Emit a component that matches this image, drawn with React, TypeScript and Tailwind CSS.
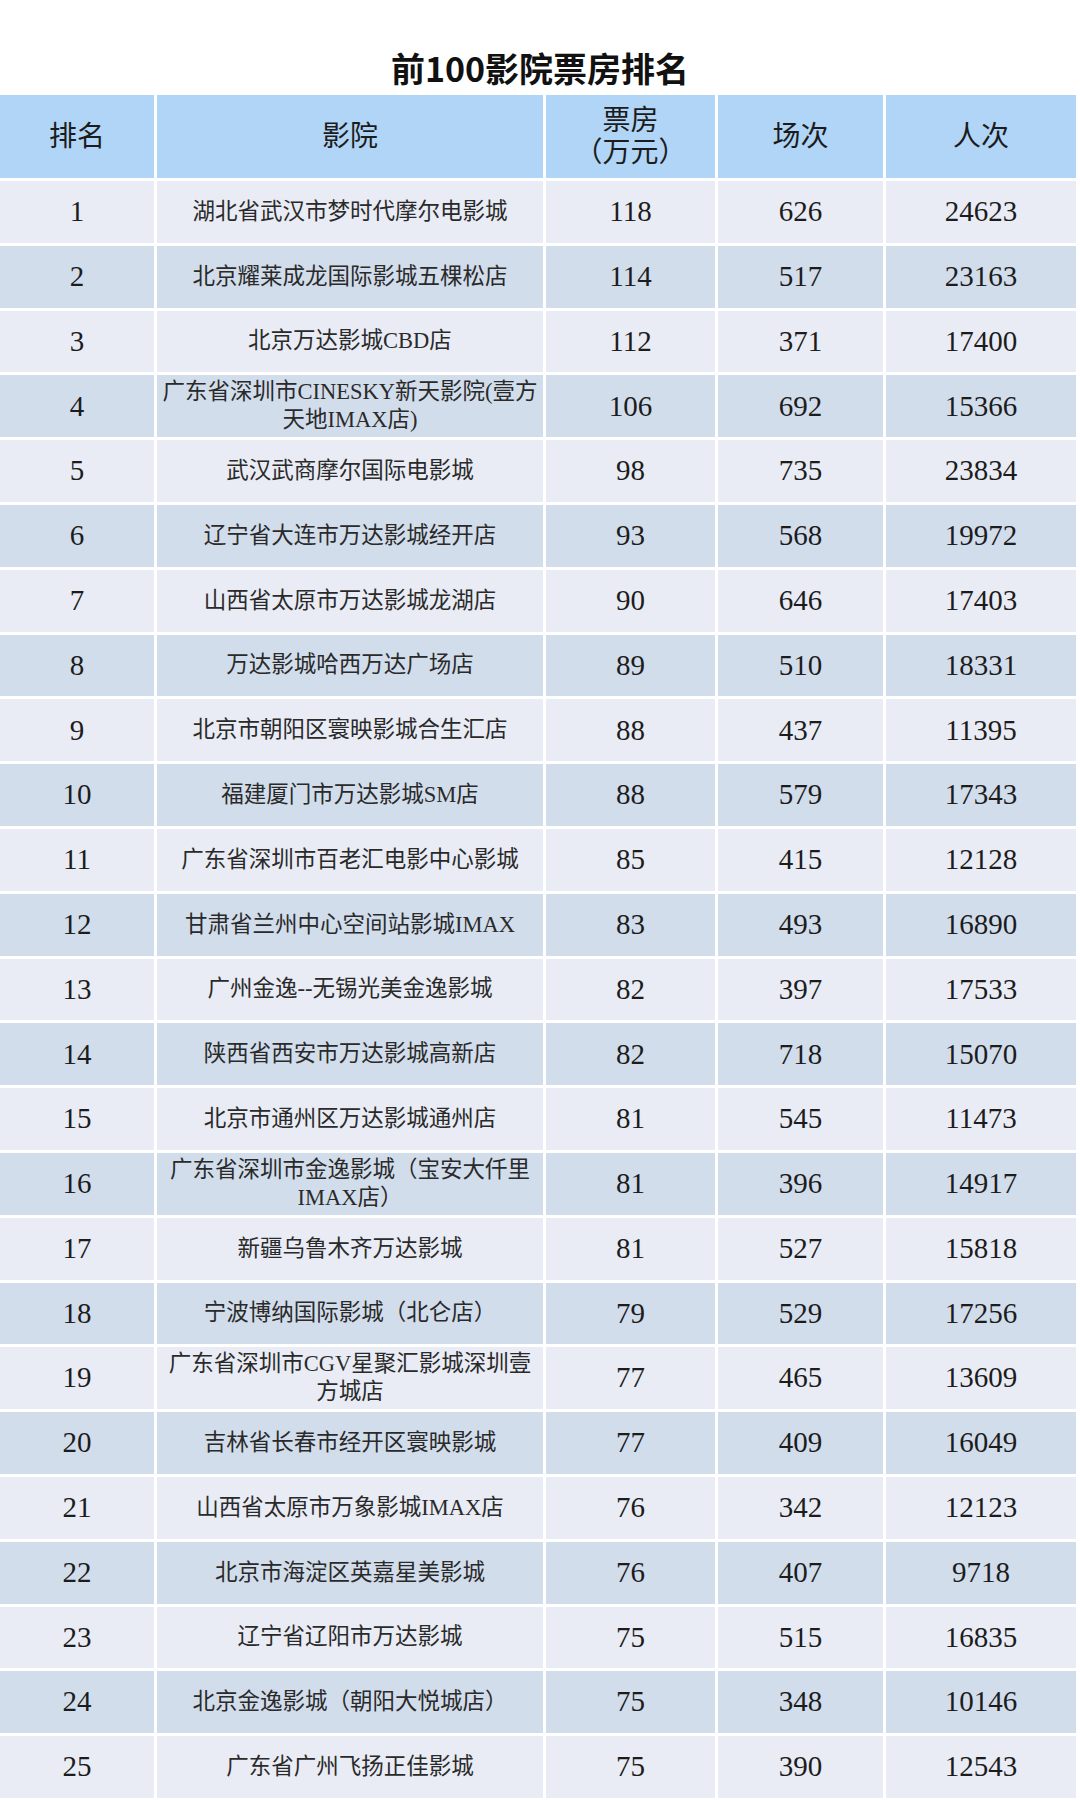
import React from "react";

type Row = { rank: number; name: string[]; box: number; shows: number; people: number };

const rows: Row[] = [
  { rank: 1, name: ["湖北省武汉市梦时代摩尔电影城"], box: 118, shows: 626, people: 24623 },
  { rank: 2, name: ["北京耀莱成龙国际影城五棵松店"], box: 114, shows: 517, people: 23163 },
  { rank: 3, name: ["北京万达影城CBD店"], box: 112, shows: 371, people: 17400 },
  { rank: 4, name: ["广东省深圳市CINESKY新天影院(壹方", "天地IMAX店)"], box: 106, shows: 692, people: 15366 },
  { rank: 5, name: ["武汉武商摩尔国际电影城"], box: 98, shows: 735, people: 23834 },
  { rank: 6, name: ["辽宁省大连市万达影城经开店"], box: 93, shows: 568, people: 19972 },
  { rank: 7, name: ["山西省太原市万达影城龙湖店"], box: 90, shows: 646, people: 17403 },
  { rank: 8, name: ["万达影城哈西万达广场店"], box: 89, shows: 510, people: 18331 },
  { rank: 9, name: ["北京市朝阳区寰映影城合生汇店"], box: 88, shows: 437, people: 11395 },
  { rank: 10, name: ["福建厦门市万达影城SM店"], box: 88, shows: 579, people: 17343 },
  { rank: 11, name: ["广东省深圳市百老汇电影中心影城"], box: 85, shows: 415, people: 12128 },
  { rank: 12, name: ["甘肃省兰州中心空间站影城IMAX"], box: 83, shows: 493, people: 16890 },
  { rank: 13, name: ["广州金逸--无锡光美金逸影城"], box: 82, shows: 397, people: 17533 },
  { rank: 14, name: ["陕西省西安市万达影城高新店"], box: 82, shows: 718, people: 15070 },
  { rank: 15, name: ["北京市通州区万达影城通州店"], box: 81, shows: 545, people: 11473 },
  { rank: 16, name: ["广东省深圳市金逸影城（宝安大仟里", "IMAX店）"], box: 81, shows: 396, people: 14917 },
  { rank: 17, name: ["新疆乌鲁木齐万达影城"], box: 81, shows: 527, people: 15818 },
  { rank: 18, name: ["宁波博纳国际影城（北仑店）"], box: 79, shows: 529, people: 17256 },
  { rank: 19, name: ["广东省深圳市CGV星聚汇影城深圳壹", "方城店"], box: 77, shows: 465, people: 13609 },
  { rank: 20, name: ["吉林省长春市经开区寰映影城"], box: 77, shows: 409, people: 16049 },
  { rank: 21, name: ["山西省太原市万象影城IMAX店"], box: 76, shows: 342, people: 12123 },
  { rank: 22, name: ["北京市海淀区英嘉星美影城"], box: 76, shows: 407, people: 9718 },
  { rank: 23, name: ["辽宁省辽阳市万达影城"], box: 75, shows: 515, people: 16835 },
  { rank: 24, name: ["北京金逸影城（朝阳大悦城店）"], box: 75, shows: 348, people: 10146 },
  { rank: 25, name: ["广东省广州飞扬正佳影城"], box: 75, shows: 390, people: 12543 },
];

const serif = "font-['Liberation_Serif','Noto_Sans_CJK_SC',serif]";

function HeadCell({ children }: { children: React.ReactNode }) {
  return (
    <div className={`bg-[#b1d5f6] flex flex-col items-center justify-center text-[28px] leading-[32px] text-[#1c1c1c] ${serif}`}>
      {children}
    </div>
  );
}

function NumCell({ value, bg }: { value: number; bg: string }) {
  return (
    <div className={`${bg} flex items-center justify-center text-[29px] text-[#1c1c1c] ${serif}`}>
      {value}
    </div>
  );
}

export default function App() {
  return (
    <div className="w-[1080px] h-[1800px] bg-white overflow-hidden">
      <div className="h-[95px] pt-[51px] text-center text-[34px] leading-[34px] font-bold text-[#111] font-['Noto_Sans_CJK_SC',sans-serif]">
        前100影院票房排名
      </div>
      <div className="grid grid-cols-[154px_386px_169px_165px_190px] grid-rows-[83px_repeat(25,61.8px)] gap-[3px]">
        <HeadCell>排名</HeadCell>
        <HeadCell>影院</HeadCell>
        <HeadCell>
          <span>票房</span>
          <span>（万元）</span>
        </HeadCell>
        <HeadCell>场次</HeadCell>
        <HeadCell>人次</HeadCell>
        {rows.map((r) => {
          const bg = r.rank % 2 === 1 ? "bg-[#e9ecf5]" : "bg-[#d2ddec]";
          return (
            <React.Fragment key={r.rank}>
              <NumCell value={r.rank} bg={bg} />
              <div className={`${bg} flex flex-col items-center justify-center text-[22.5px] leading-[28px] text-[#2a2a2a] whitespace-nowrap ${serif}`}>
                {r.name.map((l, i) => (
                  <span key={i}>{l}</span>
                ))}
              </div>
              <NumCell value={r.box} bg={bg} />
              <NumCell value={r.shows} bg={bg} />
              <NumCell value={r.people} bg={bg} />
            </React.Fragment>
          );
        })}
      </div>
    </div>
  );
}
